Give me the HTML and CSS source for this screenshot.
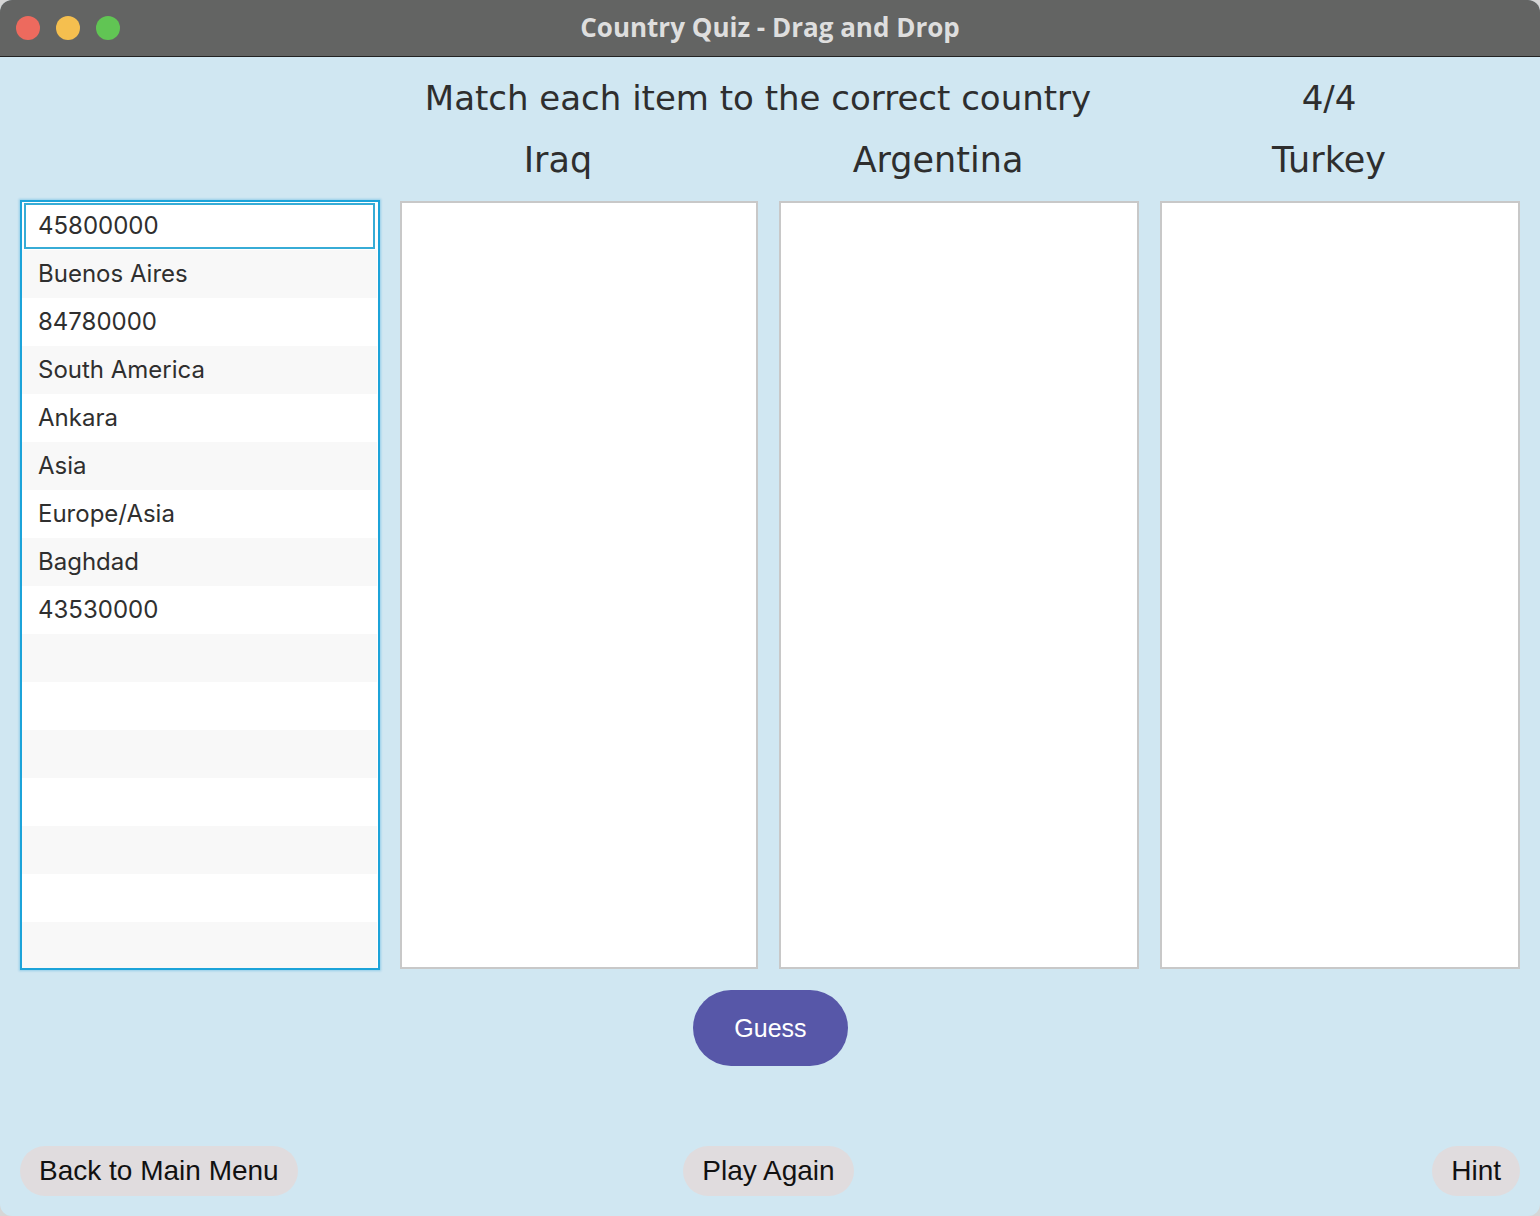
FILE: index.html
```html
<!DOCTYPE html>
<html lang="en">
<head>
<meta charset="utf-8">
<title>Country Quiz - Drag and Drop</title>
<link rel="stylesheet" href="styles.css">
</head>
<body>
<div class="window">
  <div class="titlebar">
    <div class="lights">
      <span class="light red"></span>
      <span class="light yellow"></span>
      <span class="light green"></span>
    </div>
    <div class="title">Country Quiz - Drag and Drop</div>
  </div>
  <div class="content">
    <div class="header">
      <div class="heading">Match each item to the correct country</div>
      <div class="score">4/4</div>
      <div class="label label-1">Iraq</div>
      <div class="label label-2">Argentina</div>
      <div class="label label-3">Turkey</div>
    </div>
    <div class="board">
      <ul class="items">
        <li class="item selected">45800000</li>
        <li class="item">Buenos Aires</li>
        <li class="item">84780000</li>
        <li class="item">South America</li>
        <li class="item">Ankara</li>
        <li class="item">Asia</li>
        <li class="item">Europe/Asia</li>
        <li class="item">Baghdad</li>
        <li class="item">43530000</li>
        <li class="item"></li>
        <li class="item"></li>
        <li class="item"></li>
        <li class="item"></li>
        <li class="item"></li>
        <li class="item"></li>
        <li class="item"></li>
      </ul>
      <div class="drop drop-1"></div>
      <div class="drop drop-2"></div>
      <div class="drop drop-3"></div>
    </div>
    <div class="guess-row">
      <button class="guess">Guess</button>
    </div>
    <div class="footer">
      <button class="pill pill-left">Back to Main Menu</button>
      <button class="pill pill-mid">Play Again</button>
      <button class="pill pill-right">Hint</button>
    </div>
  </div>
</div>
</body>
</html>
```

FILE: styles.css
```css
* { box-sizing: border-box; }

html, body {
  margin: 0;
  padding: 0;
  background: #d6d6d6;
}

.window {
  width: 1540px;
  height: 1216px;
  border-radius: 12px;
  overflow: hidden;
  background: #d0e7f2;
  display: flex;
  flex-direction: column;
}

.titlebar {
  height: 57px;
  flex: none;
  background: #636463;
  border-bottom: 1px solid #232323;
  display: flex;
  align-items: center;
  position: relative;
}

.lights {
  display: flex;
  gap: 16px;
  padding-left: 16px;
}

.light {
  width: 24px;
  height: 24px;
  border-radius: 50%;
  display: block;
}
.red { background: #ed6a5e; }
.yellow { background: #f5bf4f; }
.green { background: #61c554; }

.title {
  position: absolute;
  left: 0;
  right: 0;
  top: 0;
  line-height: 54px;
  text-align: center;
  font-family: "Open Sans", "Roboto", "Liberation Sans", sans-serif;
  font-weight: 700;
  font-size: 26px;
  color: #dedede;
}

.content {
  flex: 1;
  display: flex;
  flex-direction: column;
  padding: 0 20px 20px 20px;
}

.header {
  display: grid;
  grid-template-columns: 358px 360px 400px 382px;
  grid-template-rows: 64px 60px;
  padding-top: 9px;
  margin-bottom: 10px;
  font-family: "DejaVu Sans", sans-serif;
  color: #2e2e2e;
  text-align: center;
}

.heading {
  grid-column: 2 / 4;
  grid-row: 1;
  font-size: 34px;
  line-height: 64px;
}

.score {
  grid-column: 4;
  grid-row: 1;
  font-size: 34px;
  line-height: 64px;
}

.label {
  grid-row: 2;
  font-size: 35px;
  line-height: 60px;
}
.label-1 { grid-column: 2; }
.label-2 { grid-column: 3; }
.label-3 { grid-column: 4; }

.board {
  display: grid;
  grid-template-columns: 360px 20px 358px 21px 360px 21px 360px;
  height: 770px;
}

.items {
  grid-column: 1;
  list-style: none;
  margin: 0;
  padding: 0;
  border: 2px solid #1ca3d9;
  box-shadow: 0 0 2px 1px rgba(40, 160, 215, 0.35);
  background: #ffffff;
  overflow: hidden;
  font-family: "Inter", "Liberation Sans", sans-serif;
  font-size: 24px;
  color: #2f2f2f;
}

.item {
  height: 48px;
  line-height: 48px;
  padding-left: 16px;
  background: #ffffff;
  margin-right: 1px;
}
.item:nth-child(even) { background: #f8f8f8; }

.item.selected {
  border: 2px solid #37acd6;
  margin: 1px 3px 1px 2px;
  height: 46px;
  line-height: 42px;
  padding-left: 12px;
}

.drop {
  background: #ffffff;
  border: 2px solid #c8c8c8;
  margin-top: 1px;
  margin-bottom: 1px;
}
.drop-1 { grid-column: 3; }
.drop-2 { grid-column: 5; }
.drop-3 { grid-column: 7; }

.guess-row {
  display: flex;
  justify-content: center;
  padding-top: 20px;
}

.guess {
  width: 155px;
  height: 76px;
  border: none;
  border-radius: 38px;
  background: #5757a8;
  color: #ffffff;
  font-family: "Liberation Sans", Arial, sans-serif;
  font-size: 25px;
  margin-left: 1px;
}

.footer {
  margin-top: auto;
  display: grid;
  grid-template-columns: 1fr auto 1fr;
  align-items: center;
}

.pill {
  height: 50px;
  border: none;
  border-radius: 25px;
  background: #e0dcde;
  color: #111111;
  font-family: "Liberation Sans", Arial, sans-serif;
  font-size: 28px;
  padding: 0 19px;
}
.pill-left { justify-self: start; }
.pill-mid { justify-self: center; margin-left: -3px; }
.pill-right { justify-self: end; }
```
